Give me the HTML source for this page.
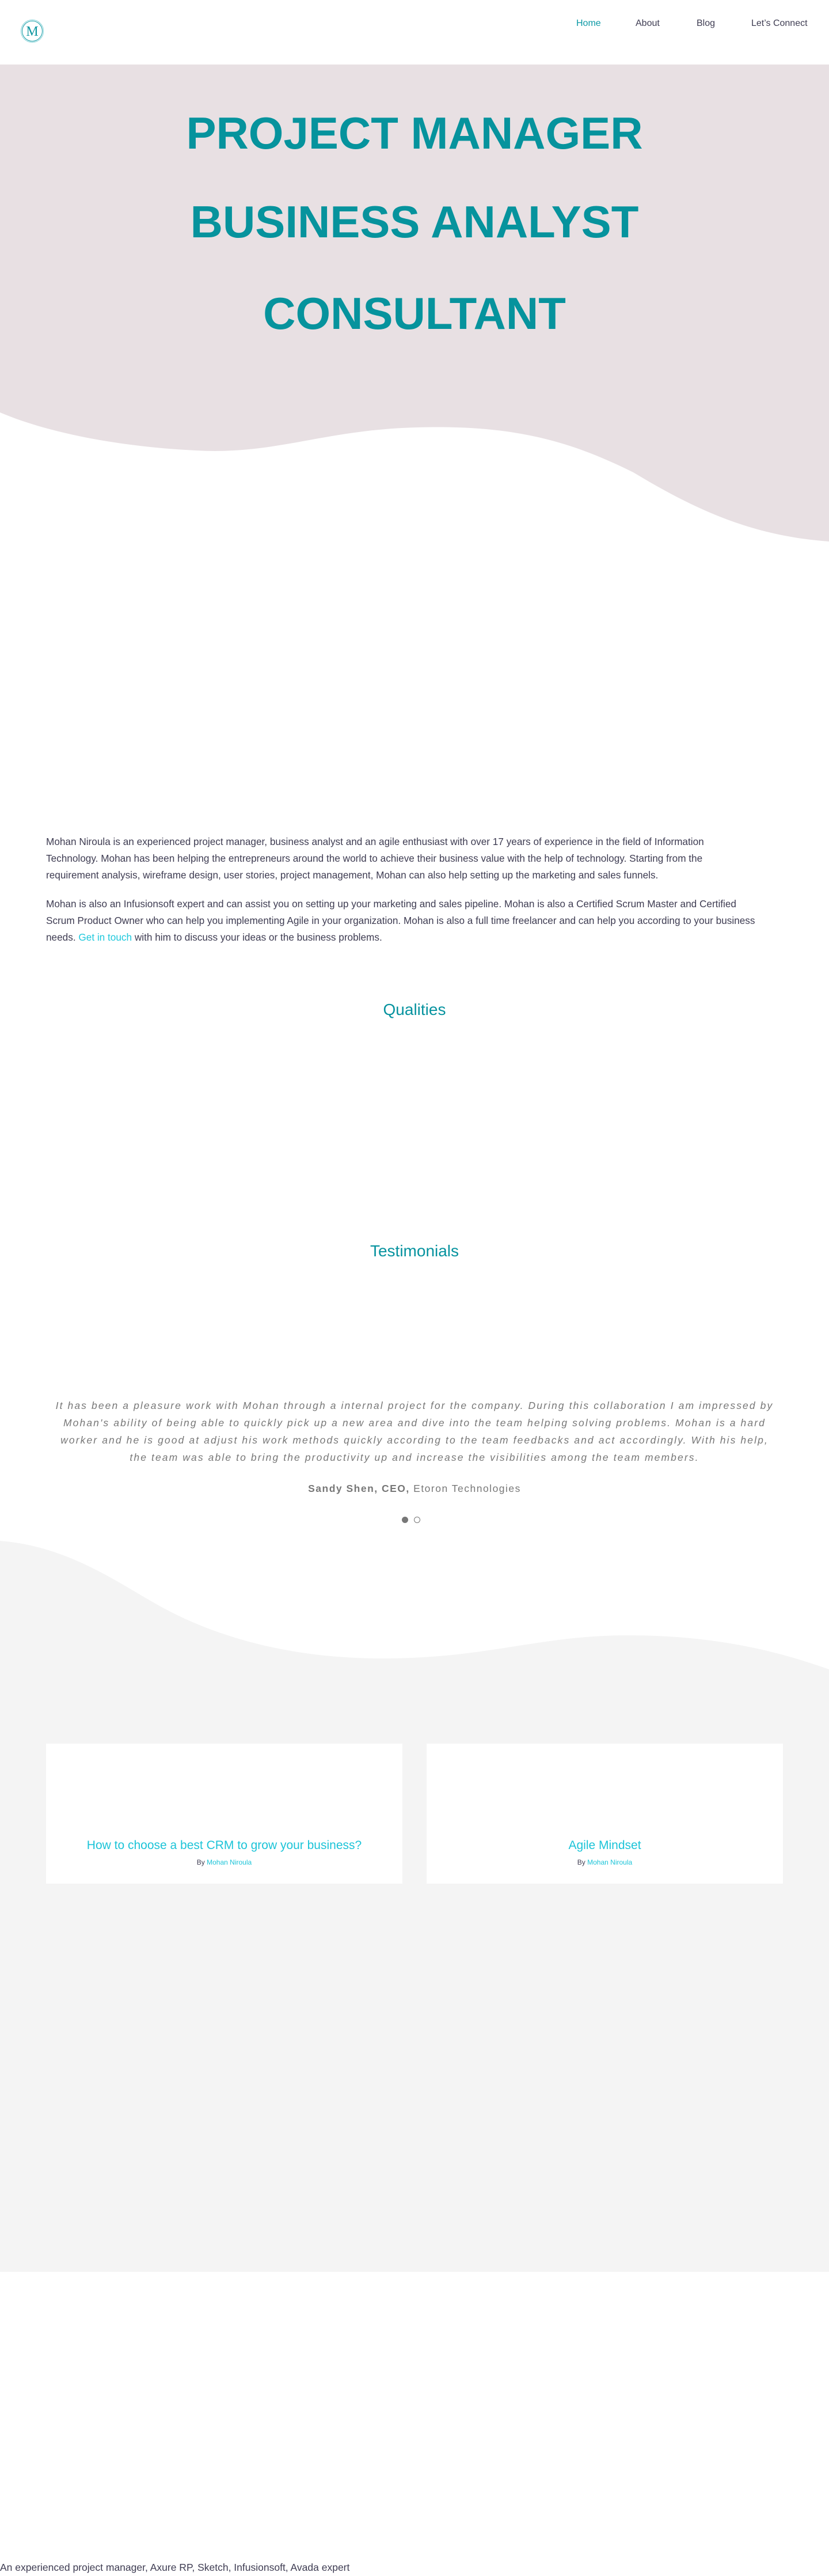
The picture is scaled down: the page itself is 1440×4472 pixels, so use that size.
<!DOCTYPE html>
<html><head><meta charset="utf-8"><style>
*{margin:0;padding:0;box-sizing:border-box}
body{width:1440px;height:4472px;position:relative;background:#fff;font-family:"Liberation Sans",sans-serif;color:#3e3c52;overflow:hidden}
.a{position:absolute}
.nav{top:32px;font-size:16px;color:#3e3c52}
h1{position:absolute;left:0;width:1440px;text-align:center;font-size:78px;font-weight:bold;color:#06939d;line-height:1}
.p{left:80px;width:1340px;font-size:17.2px;line-height:29px;white-space:nowrap}
.h2{left:0;width:1440px;text-align:center;font-size:28px;color:#07939f}
.q{left:0;width:1440px;text-align:center;font-style:italic;font-size:17.5px;line-height:30px;color:#777;letter-spacing:2.1px;white-space:nowrap}
.card{background:#fff;top:3027px;width:619px;height:243px}
.card .t{position:absolute;top:165px;width:100%;text-align:center;font-size:21px;color:#1cc4d8}
.card .b{position:absolute;top:199px;width:100%;text-align:center;font-size:12px;color:#3e3c52}
.card .b span{color:#1cc4d8}
</style></head><body>
<svg class="a" style="left:0;top:112px" width="1440" height="840" viewBox="0 112 1440 840">
<path d="M0 112H1440V940C1300 930 1200 880 1100 820C980 760 880 738 725 742C560 746 480 790 340 782C200 775 80 750 0 716Z" fill="#e8e0e3"/>
</svg>
<svg class="a" style="left:35px;top:33px" width="42" height="42" viewBox="0 0 42 42">
<circle cx="21" cy="21" r="19.5" fill="none" stroke="#7fd0d6" stroke-width="1"/>
<circle cx="21" cy="21" r="17.5" fill="none" stroke="#109aa4" stroke-width="1"/>
<text x="21" y="29" text-anchor="middle" font-family="Liberation Serif,serif" font-size="24" fill="#0f97a1">M</text>
</svg>
<div class="a nav" style="left:1001px;color:#0b99a5">Home</div>
<div class="a nav" style="left:1104px">About</div>
<div class="a nav" style="left:1210px">Blog</div>
<div class="a nav" style="left:1305px">Let’s Connect</div>
<h1 style="top:192px">PROJECT MANAGER</h1>
<h1 style="top:346px">BUSINESS ANALYST</h1>
<h1 style="top:505px">CONSULTANT</h1>
<div class="a p" style="top:1447px">Mohan Niroula is an experienced project manager, business analyst and an agile enthusiast with over 17 years of experience in the field of Information<br>Technology. Mohan has been helping the entrepreneurs around the world to achieve their business value with the help of technology. Starting from the<br>requirement analysis, wireframe design, user stories, project management, Mohan can also help setting up the marketing and sales funnels.</div>
<div class="a p" style="top:1555px">Mohan is also an Infusionsoft expert and can assist you on setting up your marketing and sales pipeline. Mohan is also a Certified Scrum Master and Certified<br>Scrum Product Owner who can help you implementing Agile in your organization. Mohan is also a full time freelancer and can help you according to your business<br>needs. <span style="color:#1ec8dc">Get in touch</span> with him to discuss your ideas or the business problems.</div>
<div class="a h2" style="top:1737px">Qualities</div>
<div class="a h2" style="top:2156px">Testimonials</div>
<div class="a q" style="top:2425px">It has been a pleasure work with Mohan through a internal project for the company. During this collaboration I am impressed by<br>Mohan's ability of being able to quickly pick up a new area and dive into the team helping solving problems. Mohan is a hard<br>worker and he is good at adjust his work methods quickly according to the team feedbacks and act accordingly. With his help,<br>the team was able to bring the productivity up and increase the visibilities among the team members.</div>
<div class="a" style="top:2574px;left:0;width:1440px;text-align:center;font-size:17.5px;color:#777;letter-spacing:1.5px"><b>Sandy Shen, CEO,</b> Etoron Technologies</div>
<div class="a" style="left:698px;top:2633px;width:11px;height:11px;border-radius:50%;background:#777"></div>
<div class="a" style="left:719px;top:2633px;width:11px;height:11px;border-radius:50%;border:1px solid #777"></div>
<svg class="a" style="left:0;top:2670px" width="1440" height="1275" viewBox="0 2670 1440 1275">
<path d="M0 2675C130 2685 220 2760 300 2800C420 2860 560 2885 716 2878C860 2872 950 2840 1083 2839C1250 2838 1360 2870 1440 2898V3944H0Z" fill="#f4f4f4"/>
</svg>
<div class="a card" style="left:80px"><div class="t">How to choose a best CRM to grow your business?</div><div class="b">By <span>Mohan Niroula</span></div></div>
<div class="a card" style="left:741px"><div class="t">Agile Mindset</div><div class="b">By <span>Mohan Niroula</span></div></div>
<div class="a" style="left:0;top:4447px;font-size:17.5px">An experienced project manager, Axure RP, Sketch, Infusionsoft, Avada expert</div>
</body></html>
